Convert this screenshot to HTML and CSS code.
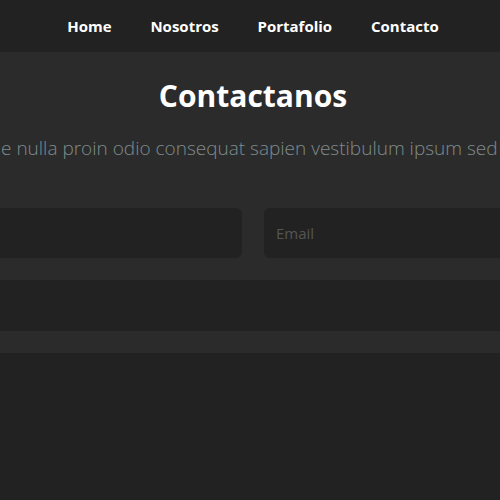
FILE: index.html
```html
<!DOCTYPE html>
<html lang="es">
<head>
<meta charset="utf-8">
<title>Contactanos</title>
<link rel="stylesheet" href="styles.css">
</head>
<body>
<header class="nav">
  <a class="nav-link" href="#">Home</a>
  <a class="nav-link" href="#">Nosotros</a>
  <a class="nav-link" href="#">Portafolio</a>
  <a class="nav-link" href="#">Contacto</a>
</header>
<section class="contact">
  <h1 class="title">Contactanos</h1>
  <p class="lead"><span class="lead-side lead-before">Lorem ipsum dolor sit amet, aliquam vitae</span> nulla proin odio consequat sapien vestibulum ipsum sed <span class="lead-side">lorem dolor sit amet aliquam</span></p>
  <form class="form">
    <input class="field" type="text" placeholder="Nombre">
    <input class="field" type="email" placeholder="Email">
    <textarea class="field area" placeholder=""></textarea>
  </form>
</section>
</body>
</html>
```
FILE: styles.css
```css
html, body {
  margin: 0;
  padding: 0;
}
body {
  background: #222222;
  font-family: "Open Sans", "Liberation Sans", sans-serif;
  overflow: hidden;
}
.nav {
  height: 52px;
  background: #222222;
  display: flex;
  justify-content: center;
  align-items: center;
  padding-left: 6px;
}
.nav-link {
  color: #ffffff;
  font-weight: 700;
  font-size: 15px;
  text-decoration: none;
  padding: 0 19.4px;
}
.contact {
  background: #2b2b2b;
  display: flex;
  flex-direction: column;
  align-items: center;
  padding: 20px 0 22px 6px;
  overflow: hidden;
}
.title {
  margin: 0;
  color: #ffffff;
  font-size: 30px;
  font-weight: 700;
  line-height: 48px;
}
.lead {
  margin: 14px 0 0 8px;
  color: #7f8c8d;
  font-size: 19px;
  font-weight: 300;
  white-space: nowrap;
  line-height: 28px;
}
.lead-side {
  display: inline-block;
  width: 420px;
  vertical-align: top;
}
.lead-before {
  text-align: right;
}
.form {
  display: grid;
  grid-template-columns: 400px 400px;
  column-gap: 22px;
  row-gap: 22px;
  margin-top: 46px;
}
.field {
  box-sizing: border-box;
  height: 50px;
  border: none;
  border-radius: 6px;
  background: #222222;
  padding: 0 12px;
  font-family: "Open Sans", "Liberation Sans", sans-serif;
  font-size: 15px;
  color: #cccccc;
  outline: none;
}
.field::placeholder {
  color: #555555;
}
.area {
  grid-column: 1 / 3;
  height: 51px;
  resize: none;
  border-radius: 0;
}
```
